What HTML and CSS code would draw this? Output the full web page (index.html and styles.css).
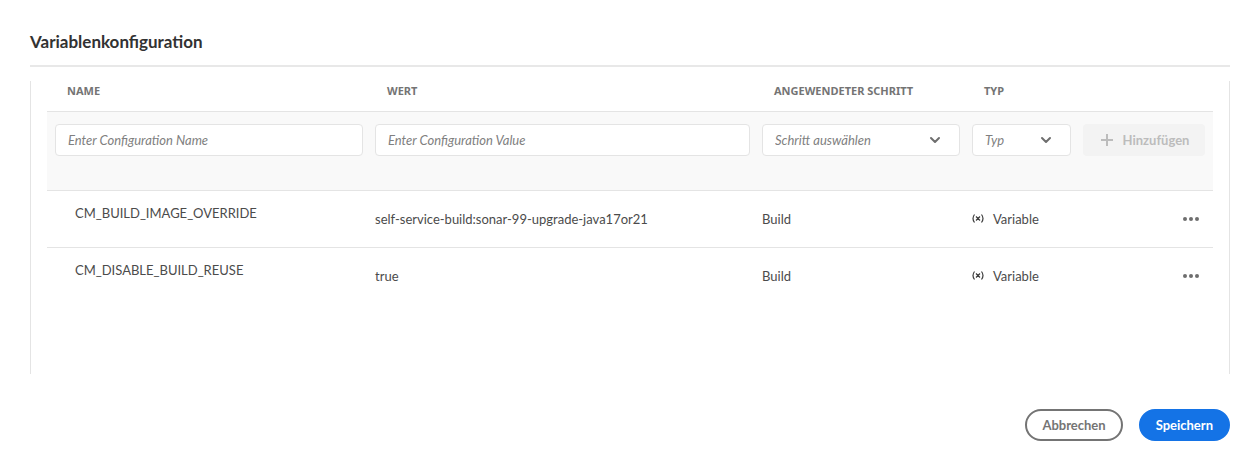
FILE: index.html
```html
<!DOCTYPE html>
<html lang="de">
<head>
<meta charset="utf-8">
<title>Variablenkonfiguration</title>
<link rel="stylesheet" href="styles.css">
</head>
<body>
<main class="dialog">
  <h1 class="dialog-title">Variablenkonfiguration</h1>
  <section class="panel">
    <table class="variables">
      <colgroup>
        <col class="col-name"><col class="col-value"><col class="col-step"><col class="col-type"><col class="col-action">
      </colgroup>
      <thead>
        <tr>
          <th class="head-name" scope="col">NAME</th>
          <th class="head-value" scope="col">WERT</th>
          <th class="head-step" scope="col">ANGEWENDETER SCHRITT</th>
          <th class="head-type" scope="col">TYP</th>
          <td></td>
        </tr>
      </thead>
      <tbody>
        <tr class="entry-row">
          <td><input class="field" type="text" aria-label="Name" placeholder="Enter Configuration Name"></td>
          <td><input class="field" type="text" aria-label="Wert" placeholder="Enter Configuration Value"></td>
          <td>
            <div class="picker">
              <select class="field" aria-label="Angewendeter Schritt"><option>Schritt auswählen</option></select>
              <svg class="chevron" viewBox="0 0 12 8" aria-hidden="true"><path d="M2 2l4 4 4-4"/></svg>
            </div>
          </td>
          <td>
            <div class="picker">
              <select class="field" aria-label="Typ"><option>Typ</option></select>
              <svg class="chevron" viewBox="0 0 12 8" aria-hidden="true"><path d="M2 2l4 4 4-4"/></svg>
            </div>
          </td>
          <td>
            <button class="add" type="button" disabled>
              <svg class="plus" viewBox="0 0 12 12" aria-hidden="true"><path d="M6 0v12M0 6h12"/></svg>
              Hinzufügen
            </button>
          </td>
        </tr>
        <tr class="data-row">
          <td class="name">CM_BUILD_IMAGE_OVERRIDE</td>
          <td>self-service-build:sonar-99-upgrade-java17or21</td>
          <td>Build</td>
          <td>
            <div class="type">
              <svg class="variable-icon" viewBox="0 0 12 10" aria-hidden="true"><path d="M2.500 .5Q-.5 4.500 2.500 8.500M9.500 .5Q12.500 4.500 9.500 8.500M4 2.500l4 4M8 2.500l-4 4"/></svg>
              Variable
            </div>
          </td>
          <td class="actions">
            <button class="more" type="button" aria-label="Weitere Aktionen"><svg viewBox="0 0 16 4" aria-hidden="true"><circle cx="2" cy="2" r="2"/><circle cx="8" cy="2" r="2"/><circle cx="14" cy="2" r="2"/></svg></button>
          </td>
        </tr>
        <tr class="data-row">
          <td class="name">CM_DISABLE_BUILD_REUSE</td>
          <td>true</td>
          <td>Build</td>
          <td>
            <div class="type">
              <svg class="variable-icon" viewBox="0 0 12 10" aria-hidden="true"><path d="M2.500 .5Q-.5 4.500 2.500 8.500M9.500 .5Q12.500 4.500 9.500 8.500M4 2.500l4 4M8 2.500l-4 4"/></svg>
              Variable
            </div>
          </td>
          <td class="actions">
            <button class="more" type="button" aria-label="Weitere Aktionen"><svg viewBox="0 0 16 4" aria-hidden="true"><circle cx="2" cy="2" r="2"/><circle cx="8" cy="2" r="2"/><circle cx="14" cy="2" r="2"/></svg></button>
          </td>
        </tr>
      </tbody>
    </table>
  </section>
  <footer class="footer">
    <button class="pill cancel" type="button">Abbrechen</button>
    <button class="pill save" type="button">Speichern</button>
  </footer>
</main>
</body>
</html>
```
FILE: styles.css
```css
* { box-sizing: border-box; }

body {
  margin: 0;
  background: #fff;
  color: #4b4b4b;
  font: 13px/20px Lato, "Noto Sans", sans-serif;
}

button, input, select { font: inherit; }

.dialog { padding: 30px 17px 21px 30px; }

.dialog-title {
  margin: 0 0 14px;
  padding-bottom: 11px;
  border-bottom: 2px solid #e8e8e8;
  color: #323232;
  font-size: 17px;
  font-weight: 700;
  line-height: 24px;
}

.panel {
  min-height: 293px;
  padding: 0 16px;
  border: solid #e4e4e4;
  border-width: 0 1px;
}

.variables {
  width: 100%;
  table-layout: fixed;
  border-spacing: 0;
}

.col-name { width: 320px; }
.col-step { width: 210px; }
.col-type { width: 111px; }
.col-action { width: 138px; }

.variables td { padding: 0 4px 0 8px; }

.variables th {
  height: 30px;
  padding: 0 0 10px 20px;
  color: #747474;
  font-family: "Noto Sans", sans-serif;
  font-size: 11px;
  font-weight: 700;
  line-height: 20px;
  text-align: left;
  white-space: nowrap;
}

.entry-row td {
  height: 80px;
  padding-top: 12px;
  border: solid #e4e4e4;
  border-width: 1px 0;
  background: #f9f9f9;
  vertical-align: top;
}

.entry-row td:last-child { padding-right: 8px; }

.field {
  display: block;
  width: 100%;
  height: 32px;
  padding: 0 12px;
  border: 1px solid #e4e4e4;
  border-radius: 4px;
  background: #fff;
  color: #808080;
  font-style: italic;
  appearance: none;
}

.field::placeholder { color: #808080; opacity: 1; }

.picker { position: relative; }

.chevron {
  position: absolute;
  top: 12px;
  right: 19px;
  width: 12px;
  height: 8px;
  fill: none;
  stroke: #6e6e6e;
  stroke-width: 2;
  stroke-linecap: round;
  stroke-linejoin: round;
  pointer-events: none;
}

.add {
  display: flex;
  align-items: center;
  justify-content: center;
  gap: 10px;
  width: 100%;
  height: 32px;
  padding: 0 0 0 2px;
  border: 0;
  border-radius: 4px;
  background: #f3f3f3;
  color: #bcbcbc;
  font-weight: 700;
}

.plus {
  width: 12px;
  height: 12px;
  stroke: #bcbcbc;
  stroke-width: 2;
}

.data-row td { height: 56px; }

.data-row + .data-row td {
  height: 57px;
  border-top: 1px solid #e4e4e4;
}

.variables .name {
  padding: 12px 4px 0 28px;
  vertical-align: top;
}

.type {
  display: flex;
  align-items: center;
  gap: 9px;
}

.variable-icon {
  width: 12px;
  height: 10px;
  fill: none;
  stroke: #3c3c3c;
  stroke-width: 1.2;
}

.variables .actions {
  padding-right: 6px;
  text-align: right;
}

.more {
  display: inline-flex;
  align-items: center;
  justify-content: center;
  width: 32px;
  height: 32px;
  padding: 0;
  border: 0;
  background: none;
  vertical-align: middle;
}

.more svg {
  width: 16px;
  height: 4px;
  fill: #6e6e6e;
}

.footer {
  display: flex;
  justify-content: flex-end;
  gap: 16px;
  padding-top: 35px;
}

.pill {
  height: 32px;
  padding: 0 15px;
  border: 2px solid #747474;
  border-radius: 16px;
  background: #fff;
  color: #747474;
  font-weight: 700;
  line-height: 16px;
}

.save {
  border-color: #1473e6;
  background: #1473e6;
  color: #fff;
}
```
